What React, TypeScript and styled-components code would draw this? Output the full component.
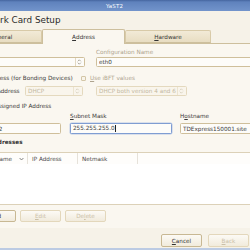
import React from "react";
import styled, { createGlobalStyle } from "styled-components";

const Global = createGlobalStyle`
  html, body { margin: 0; padding: 0; width: 250px; height: 250px; overflow: hidden; background: #f6f2e8; }
  body { font-family: "DejaVu Sans", "Liberation Sans", sans-serif; font-size: 5.7px; color: #3a3a3a; }
  #root { width: 250px; height: 250px; }
`;

const Window = styled.div`
  width: 250px;
  height: 250px;
  overflow: hidden;
  display: flex;
  flex-direction: column;
  background: #f6f2e8;
`;

const TitleBar = styled.div`
  flex: none;
  height: 11px;
  background: linear-gradient(#45659f 0, #5f82bd 2px, #7294cb 100%);
  display: flex;
  align-items: center;
  padding-left: 106px;
  color: #ffffff;
  font-size: 5.5px;
  letter-spacing: 0.2px;
`;

const Shift = styled.div`
  margin-left: -60px;
  width: 330px;
  display: flex;
  flex-direction: column;
`;

const Heading = styled.h1`
  margin: 3px 0 0 0;
  padding-left: 32px;
  height: 12px;
  line-height: 12px;
  font-size: 8.8px;
  font-weight: normal;
  color: #2a2a2a;
  white-space: nowrap;
`;

const TabBar = styled.div`
  display: flex;
  align-items: flex-end;
  height: 14px;
  margin-top: 3px;
  padding-left: 32px;
  position: relative;
  z-index: 1;
`;

const Tab = styled.div<{ $active?: boolean; $w: number; $shift?: number }>`
  box-sizing: border-box;
  width: ${(p) => p.$w}px;
  height: ${(p) => (p.$active ? 15 : 13)}px;
  margin-bottom: ${(p) => (p.$active ? -1 : 0)}px;
  padding-right: ${(p) => p.$shift ?? 0}px;
  border: 1px solid ${(p) => (p.$active ? "#cdbf9d" : "#d8caa8")};
  border-bottom: ${(p) => (p.$active ? "none" : "1px solid #cdbf9d")};
  border-radius: 2px 2px 0 0;
  background: ${(p) => (p.$active ? "#faf7f0" : "linear-gradient(#f2ead7, #e8ddc2)")};
  display: flex;
  align-items: center;
  justify-content: center;
  color: #333;
  white-space: nowrap;
`;

const Panel = styled.div`
  border-top: 1px solid #cdbf9d;
  background: #faf7f0;
  display: flex;
  flex-direction: column;
  padding-bottom: 6px;
`;

const Row = styled.div<{ $top: number; $h: number; $pad: number; $gap?: number }>`
  display: flex;
  align-items: center;
  margin-top: ${(p) => p.$top}px;
  height: ${(p) => p.$h}px;
  padding-left: ${(p) => p.$pad}px;
  gap: ${(p) => p.$gap ?? 0}px;
  white-space: nowrap;
`;

const Label = styled.div<{ $w?: number; $disabled?: boolean }>`
  width: ${(p) => (p.$w ? `${p.$w}px` : "auto")};
  flex: none;
  color: ${(p) => (p.$disabled ? "#aea48f" : "#3a3a3a")};
  line-height: 6px;
`;

const Section = styled.div`
  font-weight: bold;
  color: #333;
  line-height: 6px;
`;

const Field = styled.div<{ $w: number; $disabled?: boolean; $focus?: boolean }>`
  box-sizing: border-box;
  flex: none;
  width: ${(p) => p.$w}px;
  height: 100%;
  display: flex;
  align-items: center;
  padding: 0 2px 0 2px;
  border: 1px solid ${(p) => (p.$focus ? "#7f9dd2" : p.$disabled ? "#e4d9be" : "#cfbf9b")};
  border-radius: 1.5px;
  background: ${(p) => (p.$disabled ? "#f9f5ec" : "#fdfcf9")};
  color: ${(p) => (p.$disabled ? "#c2b79f" : "#3a3a3a")};
  box-shadow: ${(p) => (p.$focus ? "0 0 0 0.5px #b9c9e6" : "none")};
`;

const FieldText = styled.span`
  flex: 1;
  overflow: hidden;
`;

const Caret = styled.span`
  display: inline-block;
  width: 0.6px;
  height: 7px;
  margin-left: 0.5px;
  background: #222;
  vertical-align: middle;
`;

const Radio = styled.div`
  display: flex;
  align-items: center;
  gap: 4px;
  flex: none;
`;

const RadioDot = styled.span<{ $on?: boolean }>`
  box-sizing: border-box;
  width: 6px;
  height: 6px;
  border-radius: 50%;
  border: 1px solid #b9ab8a;
  background: ${(p) => (p.$on ? "radial-gradient(#555 0 1.2px, #fdfcf9 1.4px)" : "#fdfcf9")};
`;

const Check = styled.span`
  box-sizing: border-box;
  flex: none;
  width: 5px;
  height: 5px;
  border: 1px solid #d3c6a7;
  border-radius: 1px;
  background: #f8f4ea;
`;

const U = styled.span`
  text-decoration: underline;
  text-underline-offset: 0.5px;
  text-decoration-thickness: 0.5px;
`;

const Spin: React.FC<{ $disabled?: boolean }> = ({ $disabled }) => (
  <svg width="7" height="8" viewBox="0 0 7 8" style={{ flex: "none" }}>
    <line x1="0.5" y1="0" x2="0.5" y2="8" stroke={$disabled ? "#e6dcc4" : "#d6c9ab"} strokeWidth="0.7" />
    <path d="M2.8 3.3 L4.3 1.8 L5.8 3.3" fill="none" stroke={$disabled ? "#cfc5b0" : "#8a8274"} strokeWidth="0.7" />
    <path d="M2.8 4.7 L4.3 6.2 L5.8 4.7" fill="none" stroke={$disabled ? "#cfc5b0" : "#8a8274"} strokeWidth="0.7" />
  </svg>
);

const Table = styled.div`
  margin-top: 7px;
  margin-left: 36px;
  height: 53px;
  box-sizing: border-box;
  border-top: 1px solid #dcd1b8;
  border-bottom: 1px solid #dcd1b8;
  background: #ffffff;
  display: flex;
  flex-direction: column;
`;

const HeadRow = styled.div`
  display: flex;
  height: 11px;
  background: #fefdfb;
`;

const HeadCell = styled.div<{ $w?: number }>`
  box-sizing: border-box;
  width: ${(p) => (p.$w ? `${p.$w}px` : "auto")};
  flex: ${(p) => (p.$w ? "none" : "1")};
  display: flex;
  align-items: center;
  justify-content: space-between;
  padding: 0 3px 0 4px;
  border-right: 1px solid #e6e2da;
  color: #4a4a4a;
  white-space: nowrap;
`;

const Body = styled.div`
  flex: 1;
  background: #ffffff;
`;

const ButtonRow = styled.div<{ $top: number; $pad: number }>`
  display: flex;
  margin-top: ${(p) => p.$top}px;
  padding-left: ${(p) => p.$pad}px;
  gap: 4px;
`;

const Button = styled.div<{ $disabled?: boolean; $h?: number; $ml?: number }>`
  box-sizing: border-box;
  flex: none;
  width: 41px;
  height: ${(p) => p.$h ?? 12}px;
  margin-left: ${(p) => p.$ml ?? 0}px;
  border: 1px solid ${(p) => (p.$disabled ? "#e3d7bb" : "#c8b893")};
  border-radius: 2px;
  background: linear-gradient(#fcfaf5, #f1ebdc);
  display: flex;
  align-items: center;
  justify-content: center;
  color: ${(p) => (p.$disabled ? "#cbc0a8" : "#333")};
  white-space: nowrap;
`;

const Footer = styled.div`
  display: flex;
  margin-top: 6px;
  padding-left: 8px;
`;

const Strip = styled.div`
  margin-top: auto;
  height: 2px;
  background: #bccbe3;
  flex: none;
`;

export default function App() {
  return (
    <>
      <Global />
      <Window>
        <TitleBar>YaST2</TitleBar>
        <Shift>
          <Heading>Network Card Setup</Heading>
          <TabBar>
            <Tab $w={70} $shift={12}>
              <U>G</U>eneral
            </Tab>
            <Tab $w={83} $active>
              <U>A</U>ddress
            </Tab>
            <Tab $w={86}>
              <U>H</U>ardware
            </Tab>
          </TabBar>
          <Panel>
            <Row $top={5} $h={6} $pad={8} $gap={11}>
              <Label $w={137}>
                <U>D</U>evice Type
              </Label>
              <Label $disabled>Configuration Name</Label>
            </Row>
            <Row $top={2} $h={10} $pad={8} $gap={11}>
              <Field $w={137}>
                <FieldText>Ethernet</FieldText>
                <Spin />
              </Field>
              <Field $w={180}>
                <FieldText>eth0</FieldText>
              </Field>
            </Row>
            <Row $top={8} $h={6} $pad={20}>
              <Radio style={{ width: 121 }}>
                <RadioDot />
                <span>
                  <U>N</U>o IP Address (for Bonding Devices)
                </span>
              </Radio>
              <Check />
              <Label $disabled style={{ marginLeft: 4 }}>
                <U>U</U>se iBFT values
              </Label>
            </Row>
            <Row $top={5} $h={10} $pad={20}>
              <Radio style={{ width: 65 }}>
                <RadioDot />
                <span>
                  D<U>y</U>namic Address
                </span>
              </Radio>
              <Field $w={58} $disabled>
                <FieldText>DHCP</FieldText>
                <Spin $disabled />
              </Field>
              <Field $w={91} $disabled style={{ marginLeft: 13 }}>
                <FieldText>DHCP both version 4 and 6</FieldText>
                <Spin $disabled />
              </Field>
            </Row>
            <Row $top={7} $h={6} $pad={16}>
              <Radio>
                <RadioDot $on />
                <span>
                  <U>S</U>tatically Assigned IP Address
                </span>
              </Radio>
            </Row>
            <Row $top={4} $h={6} $pad={25}>
              <Label $w={105}>
                <U>I</U>P Address
              </Label>
              <Label $w={110}>
                <U>S</U>ubnet Mask
              </Label>
              <Label>
                H<U>o</U>stname
              </Label>
            </Row>
            <Row $top={4} $h={11} $pad={25}>
              <Field $w={96}>
                <FieldText>192.168.1.2</FieldText>
              </Field>
              <Field $w={102} $focus style={{ marginLeft: 9 }}>
                <FieldText>
                  255.255.255.0
                  <Caret />
                </FieldText>
              </Field>
              <Field $w={100} style={{ marginLeft: 8 }}>
                <FieldText>TDExpress150001.site</FieldText>
              </Field>
            </Row>
            <Row $top={5} $h={6} $pad={14.5}>
              <Section>Additional Addresses</Section>
            </Row>
            <Table>
              <HeadRow>
                <HeadCell $w={52}>
                  <span>Alias Name</span>
                  <svg width="5" height="4" viewBox="0 0 5 4">
                    <path d="M0.6 1 L2.5 3 L4.4 1" fill="none" stroke="#555" strokeWidth="0.7" />
                  </svg>
                </HeadCell>
                <HeadCell $w={50}>
                  <span>IP Address</span>
                </HeadCell>
                <HeadCell $w={60}>
                  <span>Netmask</span>
                </HeadCell>
                <HeadCell />
              </HeadRow>
              <Body />
            </Table>
            <ButtonRow $top={5} $pad={35}>
              <Button>
                A<U>d</U>d
              </Button>
              <Button $disabled>
                <U>E</U>dit
              </Button>
              <Button $disabled>
                De<U>l</U>ete
              </Button>
            </ButtonRow>
          </Panel>
          <Footer>
            <Button $h={13}>
              <U>H</U>elp
            </Button>
            <Button $h={13} $ml={172}>
              <U>C</U>ancel
            </Button>
            <Button $h={13} $ml={6} $disabled>
              <U>B</U>ack
            </Button>
            <Button $h={13} $ml={6}>
              <U>N</U>ext
            </Button>
          </Footer>
        </Shift>
        <Strip />
      </Window>
    </>
  );
}
